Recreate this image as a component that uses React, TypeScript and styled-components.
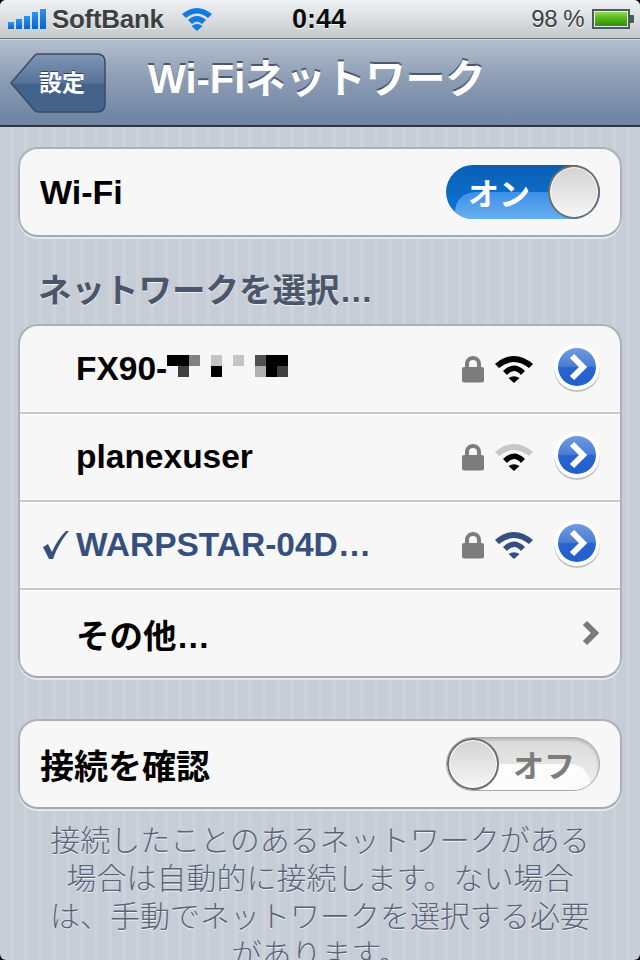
import type { ReactNode } from "react";
import styled, { createGlobalStyle } from "styled-components";

const GlobalStyle = createGlobalStyle`
  html, body {
    margin: 0;
    padding: 0;
    width: 640px;
    height: 960px;
    overflow: hidden;
    background: #000;
  }
  body {
    font-family: "Liberation Sans", "Noto Sans CJK JP", sans-serif;
  }
`;

const Screen = styled.div`
  width: 640px;
  height: 960px;
  overflow: hidden;
  border-radius: 6px;
  display: flex;
  flex-direction: column;
  background: repeating-linear-gradient(
    90deg,
    #c6cdd6 0,
    #c6cdd6 10px,
    #cbd2da 10px,
    #cbd2da 14px
  );
`;

const StatusBar = styled.div`
  height: 39px;
  flex: none;
  display: grid;
  grid-template-columns: 1fr auto 1fr;
  align-items: center;
  padding: 0 10px 0 8px;
  box-sizing: border-box;
  background: linear-gradient(#eef2f4 0, #dfe3e5 40%, #c3c8c9 100%);
  border-bottom: 1px solid #6d7073;
`;

const StatusLeft = styled.div`
  display: flex;
  align-items: center;
`;

const StatusRight = styled.div`
  display: flex;
  align-items: center;
  justify-content: flex-end;
  gap: 8px;
  margin-right: -4px;
`;

const Carrier = styled.span`
  font-size: 26px;
  color: #3d3f42;
  font-weight: 700;
  margin-left: 6px;
  letter-spacing: -0.3px;
  text-shadow: 0 1px 0 #fff;
`;

const Clock = styled.span`
  font-size: 27px;
  font-weight: 700;
  color: #0c0c0c;
  text-shadow: 0 1px 0 #fff;
`;

const Percent = styled.span`
  font-size: 24px;
  letter-spacing: -0.5px;
  color: #3d3f42;
  text-shadow: 0 1px 0 #fff;
`;

const NavBar = styled.div`
  height: 88px;
  flex: none;
  display: flex;
  align-items: center;
  padding: 0 0 0 10px;
  box-sizing: border-box;
  background: linear-gradient(#b4bfce 0, #8d9db4 45%, #6d83a2 100%);
  border-top: 1px solid #d3dae2;
  border-bottom: 2px solid #2d3642;
`;

const BackButton = styled.div`
  width: 96px;
  height: 60px;
  margin-top: 1px;
  flex: none;
  position: relative;
  display: flex;
  align-items: center;
  justify-content: center;
  padding: 0 0 4px 8px;
  box-sizing: border-box;
  color: #fff;
  font-size: 23px;
  font-weight: 700;
  text-shadow: 0 -1px 0 #33445e;
`;

const BackShape = styled.svg`
  position: absolute;
  left: 0;
  top: 0;
`;

const BackLabel = styled.span`
  position: relative;
`;

const Title = styled.div`
  margin: 0 0 14px 42px;
  font-size: 40px;
  font-weight: 700;
  color: #fff;
  text-shadow: 0 -2px 0 #4b586c;
  white-space: nowrap;
`;

const Content = styled.div`
  padding: 20px 18px 0 18px;
  display: flex;
  flex-direction: column;
`;

const Group = styled.div<{ $gap?: number }>`
  background: #f7f7f7;
  border: 2px solid #abb1ba;
  border-bottom-color: #a3a9b2;
  border-radius: 20px;
  margin-top: ${(p) => p.$gap ?? 0}px;
  box-shadow: 0 2px 0 #e4e8ec;
  overflow: hidden;
`;

const Row = styled.div<{ $first?: boolean }>`
  height: ${(p) => (p.$first ? 86 : 88)}px;
  box-sizing: border-box;
  display: flex;
  align-items: center;
  padding: 0 20px;
  border-top: ${(p) => (p.$first ? "none" : "2px solid #c9c9c9")};
  box-shadow: ${(p) => (p.$first ? "none" : "inset 0 1px 0 #fff")};
`;

const RowLabel = styled.span`
  font-size: 34px;
  font-weight: 700;
  color: #000;
`;

const Check = styled.svg`
  width: 36px;
  height: 30px;
  flex: none;
  display: block;
`;

const NetName = styled.span<{ $active?: boolean }>`
  flex: 1;
  padding-left: ${(p) => (p.$active ? 0 : 36)}px;
  font-size: 33.5px;
  font-weight: 700;
  color: ${(p) => (p.$active ? "#35507f" : "#000")};
  white-space: nowrap;
  display: flex;
  align-items: center;
`;

const Blocks = styled.span`
  display: inline-grid;
  grid-template-columns: repeat(11, 11px);
  grid-template-rows: repeat(2, 11px);
  transform: translate(0, -3px);
`;

const Block = styled.span<{ $c: string }>`
  background: ${(p) => p.$c};
`;

const Trailing = styled.div`
  display: flex;
  align-items: center;
  flex: none;
  margin-right: -1px;
`;

const Disclosure = styled.svg`
  margin-left: 20px;
  display: block;
`;

const LockIcon = styled.svg`
  display: block;
`;

const SignalIcon = styled.svg`
  display: block;
  margin-left: 10px;
`;

const Switch = styled.div<{ $on?: boolean }>`
  margin-left: auto;
  width: 154px;
  height: 54px;
  flex: none;
  box-sizing: border-box;
  border-radius: 27px;
  position: relative;
  overflow: hidden;
  display: flex;
  align-items: center;
  justify-content: ${(p) => (p.$on ? "flex-start" : "flex-end")};
  padding: ${(p) => (p.$on ? "0 0 0 22px" : "0 24px 0 0")};
  font-size: 31px;
  font-weight: 700;
  color: ${(p) => (p.$on ? "#fff" : "#7c7c7c")};
  background: ${(p) =>
    p.$on
      ? "linear-gradient(#0a5fb4 0, #0b78d8 100%)"
      : "linear-gradient(#d9d9d9 0, #f2f2f2 100%)"};
  border: ${(p) => (p.$on ? "none" : "1px solid #a8a8a8")};
  box-shadow: ${(p) => (p.$on ? "none" : "inset 0 2px 3px #b5b5b5")};

  &::before {
    content: "";
    position: absolute;
    top: 50%;
    bottom: 0;
    left: ${(p) => (p.$on ? "9px" : "0")};
    right: ${(p) => (p.$on ? "0" : "9px")};
    border-radius: ${(p) => (p.$on ? "20px 0 0 0" : "0 20px 0 0")};
    background: ${(p) =>
      p.$on
        ? "linear-gradient(#3d90e8 0, #66b0ef 100%)"
        : "linear-gradient(#fdfdfd 0, #fbfbfb 100%)"};
  }
`;

const SwitchText = styled.span`
  position: relative;
  top: -1px;
`;

const Knob = styled.div<{ $on?: boolean }>`
  position: absolute;
  top: 0;
  bottom: 0;
  ${(p) => (p.$on ? "right: 0;" : "left: 0;")}
  width: 52px;
  box-sizing: border-box;
  border-radius: 50%;
  border: 2px solid #6f6f6f;
  box-shadow: inset 0 0 0 1px #fff;
  background: linear-gradient(#d3d3d3 0, #e6e6e6 55%, #f6f6f6 100%);
`;

const SectionTitle = styled.div`
  margin: 26px 0 0 20px;
  height: 61px;
  font-size: 33.5px;
  font-weight: 700;
  color: #4c566a;
  text-shadow: 0 1px 0 #eef1f4;
`;

const Footer = styled.div`
  margin-top: 13px;
  margin-inline: -4px;
  text-align: center;
  font-size: 30px;
  font-weight: 300;
  line-height: 38px;
  color: #58647a;
  text-shadow: 0 1px 0 #eef1f4;
`;

const blockRows: string[][] = [
  ["#000", "#000", "#808080", "transparent", "#c4c4c4", "transparent", "#c4c4c4", "transparent", "#505050", "#000", "#000"],
  ["transparent", "#404040", "transparent", "transparent", "#000", "transparent", "transparent", "transparent", "#b0b0b0", "#000", "#404040"],
];

function Lock() {
  return (
    <LockIcon width="24" height="28" viewBox="0 0 24 28">
      <path d="M6 13V9a6 6 0 0 1 12 0v4" fill="none" stroke="#7d7d7d" strokeWidth="4" />
      <rect x="1" y="12" width="22" height="15.500" rx="2" fill="#7d7d7d" />
    </LockIcon>
  );
}

function WifiBars({ color, outer }: { color: string; outer?: string }) {
  return (
    <SignalIcon width="38" height="28" viewBox="0 0 38 28">
      <path d="M0 9Q19 -7 38 9L34 13Q19 1 4 13Z" fill={outer ?? color} />
      <path d="M8 16Q19 5 30 16L26 20Q19 12 12 20Z" fill={color} />
      <path d="M19 28L13.500 23Q19 19.500 24.500 23Z" fill={color} />
    </SignalIcon>
  );
}

function DetailButton({ id }: { id: string }) {
  return (
    <Disclosure width="48" height="50" viewBox="0 0 48 50">
      <defs>
        <linearGradient id={id} x1="0" y1="0" x2="0" y2="1">
          <stop offset="0" stopColor="#6f9be0" />
          <stop offset="0.48" stopColor="#4a7dd4" />
          <stop offset="0.52" stopColor="#2a63cd" />
          <stop offset="1" stopColor="#2160cc" />
        </linearGradient>
      </defs>
      <circle cx="24" cy="25" r="23" fill="#5a6068" opacity="0.35" />
      <circle cx="24" cy="23" r="23" fill="#fff" />
      <circle cx="24" cy="23" r="19" fill={`url(#${id})`} />
      <path d="M19 12L30 23L19 34" fill="none" stroke="#fff" strokeWidth="6" />
    </Disclosure>
  );
}

function Network({ id, active, weak }: { id: string; active?: boolean; weak?: boolean }) {
  return (
    <Trailing>
      <Lock />
      <WifiBars color={active ? "#35507f" : "#000"} outer={weak ? "#c8c8c8" : undefined} />
      <DetailButton id={id} />
    </Trailing>
  );
}

function StatusWifi({ children }: { children?: ReactNode }) {
  return (
    <svg width="32" height="26" viewBox="0 0 32 26" style={{ marginLeft: 17 }}>
      <path d="M1 8Q16 -4 31 8L27 12Q16 3 5 12Z" fill="#1479e0" />
      <path d="M7 14Q16 6 25 14L21 18Q16 13 11 18Z" fill="#1479e0" />
      <path d="M16 25L10.500 20Q16 16 21.500 20Z" fill="#1479e0" />
      {children}
    </svg>
  );
}

export default function App() {
  return (
    <Screen>
      <GlobalStyle />
      <StatusBar>
        <StatusLeft>
          <svg width="38" height="20" viewBox="0 0 38 20">
            <defs>
              <linearGradient id="signalFill" x1="0" y1="0" x2="0" y2="1">
                <stop offset="0" stopColor="#2a95f2" />
                <stop offset="1" stopColor="#0b62cc" />
              </linearGradient>
            </defs>
            <rect x="0" y="13" width="6" height="7" fill="url(#signalFill)" />
            <rect x="8" y="10" width="6" height="10" fill="url(#signalFill)" />
            <rect x="16" y="7" width="6" height="13" fill="url(#signalFill)" />
            <rect x="24" y="3" width="6" height="17" fill="url(#signalFill)" />
            <rect x="32" y="0" width="6" height="20" fill="url(#signalFill)" />
          </svg>
          <Carrier>SoftBank</Carrier>
          <StatusWifi />
        </StatusLeft>
        <Clock>0:44</Clock>
        <StatusRight>
          <Percent>98 %</Percent>
          <svg width="42" height="20" viewBox="0 0 42 20">
            <defs>
              <linearGradient id="batteryFill" x1="0" y1="0" x2="0" y2="1">
                <stop offset="0" stopColor="#8fdc55" />
                <stop offset="0.45" stopColor="#55b81c" />
                <stop offset="1" stopColor="#2f8c0c" />
              </linearGradient>
            </defs>
            <rect x="1" y="1" width="36" height="18" fill="#e8eced" stroke="#4d5a5a" strokeWidth="2" />
            <rect x="3" y="3" width="32" height="14" fill="url(#batteryFill)" />
            <path d="M38 6h3a1 1 0 0 1 1 1v6a1 1 0 0 1-1 1h-3z" fill="#4d5a5a" />
          </svg>
        </StatusRight>
      </StatusBar>
      <NavBar>
        <BackButton>
          <BackShape width="96" height="60" viewBox="0 0 96 60">
            <defs>
              <linearGradient id="backFill" x1="0" y1="0" x2="0" y2="1">
                <stop offset="0" stopColor="#7f95b4" />
                <stop offset="0.5" stopColor="#577399" />
                <stop offset="0.52" stopColor="#416289" />
                <stop offset="1" stopColor="#44648c" />
              </linearGradient>
            </defs>
            <path
              d="M1 30L25 2Q26.500 1 28 1H87Q95 1 95 9V51Q95 59 87 59H28Q26.500 59 25 58Z"
              fill="url(#backFill)"
              stroke="#3a4a63"
              strokeWidth="1.500"
            />
          </BackShape>
          <BackLabel>設定</BackLabel>
        </BackButton>
        <Title>Wi-Fiネットワーク</Title>
      </NavBar>
      <Content>
        <Group>
          <Row $first>
            <RowLabel>Wi-Fi</RowLabel>
            <Switch $on>
              <SwitchText>オン</SwitchText>
              <Knob $on />
            </Switch>
          </Row>
        </Group>
        <SectionTitle>ネットワークを選択…</SectionTitle>
        <Group>
          <Row $first>
            <NetName>
              FX90-
              <Blocks>
                {blockRows.flat().map((c, i) => (
                  <Block key={i} $c={c} />
                ))}
              </Blocks>
            </NetName>
            <Network id="detail1" />
          </Row>
          <Row>
            <NetName>planexuser</NetName>
            <Network id="detail2" weak />
          </Row>
          <Row>
            <Check viewBox="0 0 36 30">
              <path d="M3 17L8 14L12 22C16 13 20 7 26 1H29C22 9 17 18 13 29H9Z" fill="#35507f" />
            </Check>
            <NetName $active>WARPSTAR-04D…</NetName>
            <Network id="detail3" active />
          </Row>
          <Row>
            <NetName>その他…</NetName>
            <svg width="20" height="26" viewBox="0 0 20 26" style={{ marginRight: -1 }}>
              <path d="M4 3L14 13L4 23" fill="none" stroke="#7a7a7a" strokeWidth="6" />
            </svg>
          </Row>
        </Group>
        <Group $gap={41}>
          <Row $first>
            <RowLabel>接続を確認</RowLabel>
            <Switch>
              <SwitchText>オフ</SwitchText>
              <Knob />
            </Switch>
          </Row>
        </Group>
        <Footer>
          接続したことのあるネットワークがある
          <br />
          場合は自動的に接続します。ない場合
          <br />
          は、手動でネットワークを選択する必要
          <br />
          があります。
        </Footer>
      </Content>
    </Screen>
  );
}
